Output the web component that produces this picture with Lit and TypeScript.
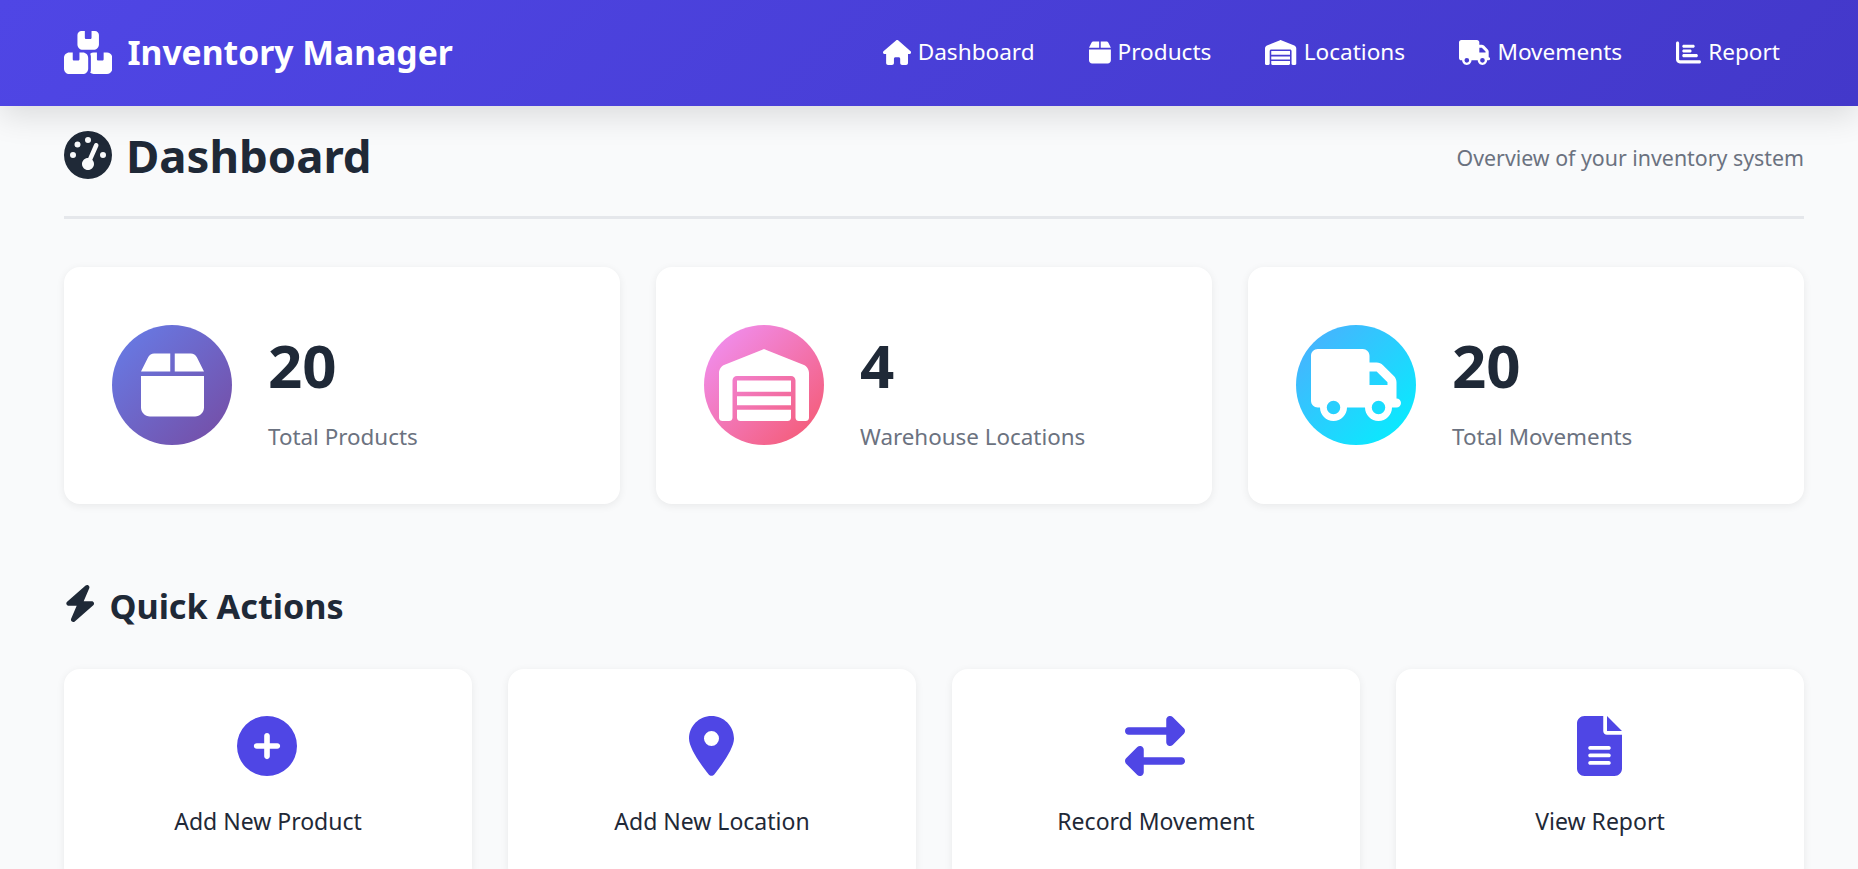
import { LitElement, css, html, svg } from "lit";
import { customElement } from "lit/decorators.js";

// font awesome solid shapes, [viewBox width, path]
const icons: Record<string, [number, string]> = {
  boxes: [576, "M248 0H208c-26.5 0-48 21.5-48 48V160c0 35.3 28.7 64 64 64H352c35.3 0 64-28.7 64-64V48c0-26.5-21.5-48-48-48H328V80c0 8.8-7.2 16-16 16H264c-8.8 0-16-7.2-16-16V0zM64 256c-35.3 0-64 28.7-64 64V448c0 35.3 28.7 64 64 64H224c35.3 0 64-28.7 64-64V320c0-35.3-28.7-64-64-64H184v80c0 8.8-7.2 16-16 16H120c-8.8 0-16-7.2-16-16V256H64zM352 512H512c35.3 0 64-28.7 64-64V320c0-35.3-28.7-64-64-64H472v80c0 8.8-7.2 16-16 16H408c-8.8 0-16-7.2-16-16V256H352c-15 0-28.8 5.1-39.7 13.8c4.9 10.4 7.7 22 7.7 34.2V464c0 12.2-2.8 23.8-7.7 34.2C323.2 506.9 337 512 352 512z"],
  gauge: [512, "M0 256a256 256 0 1 1 512 0A256 256 0 1 1 0 256zM288 96a32 32 0 1 0 -64 0 32 32 0 1 0 64 0zM256 416c35.3 0 64-28.7 64-64c0-17.4-6.9-33.1-18.1-44.6L366 161.7c5.3-12.1-.2-26.3-12.3-31.6s-26.3 .2-31.6 12.3L257.9 288c-.6 0-1.3 0-1.9 0c-35.3 0-64 28.7-64 64s28.7 64 64 64zM176 144a32 32 0 1 0 -64 0 32 32 0 1 0 64 0zM96 288a32 32 0 1 0 0-64 32 32 0 1 0 0 64zm352-32a32 32 0 1 0 -64 0 32 32 0 1 0 64 0z"],
  house: [576, "M575.8 255.5c0 18-15 32.1-32 32.1h-32l.7 160.2c0 2.7-.2 5.4-.5 8.1V472c0 22.1-17.9 40-40 40H456c-1.1 0-2.2 0-3.3-.1c-1.4 .1-2.8 .1-4.2 .1H416 392c-22.1 0-40-17.9-40-40V448 384c0-17.7-14.3-32-32-32H256c-17.7 0-32 14.3-32 32v64 24c0 22.1-17.9 40-40 40H160 128.1c-1.5 0-3-.1-4.5-.2c-1.2 .1-2.4 .2-3.6 .2H104c-22.1 0-40-17.9-40-40V360c0-.9 0-1.9 .1-2.8V287.6H32c-18 0-32-14-32-32.1c0-9 3-17 10-24L266.4 8c7-7 15-8 22-8s15 2 21 7L564.8 231.5c8 7 12 15 11 24z"],
  box: [448, "M50.7 58.5L0 160H208V32H93.7C75.5 32 58.9 42.3 50.7 58.5zM240 160H448L397.3 58.5C389.1 42.3 372.5 32 354.3 32H240V160zm208 32H0V416c0 35.3 28.7 64 64 64H384c35.3 0 64-28.7 64-64V192z"],
  warehouse: [640, "M0 488V171.3c0-26.2 15.9-49.7 40.2-59.4L308.1 4.8c7.6-3.1 16.1-3.1 23.8 0L599.8 111.9c24.3 9.7 40.2 33.3 40.2 59.4V488c0 13.3-10.7 24-24 24H568c-13.3 0-24-10.7-24-24V224c0-17.7-14.3-32-32-32H128c-17.7 0-32 14.3-32 32V488c0 13.3-10.7 24-24 24H24c-13.3 0-24-10.7-24-24zm488 24H152c-13.3 0-24-10.7-24-24V432H512v56c0 13.3-10.7 24-24 24zM128 400V336H512v64H128zm0-96V224H512v80H128z"],
  truck: [640, "M48 0C21.5 0 0 21.5 0 48V368c0 26.5 21.5 48 48 48H64c0 53 43 96 96 96s96-43 96-96H384c0 53 43 96 96 96s96-43 96-96h32c17.7 0 32-14.3 32-32s-14.3-32-32-32V288 256 237.3c0-17-6.7-33.3-18.7-45.3L512 114.7c-12-12-28.3-18.7-45.3-18.7H416V48c0-26.5-21.5-48-48-48H48zM416 160h50.7L544 237.3V256H416V160zM112 416a48 48 0 1 1 96 0 48 48 0 1 1 -96 0zm368-48a48 48 0 1 1 0 96 48 48 0 1 1 0-96z"],
  chart: [512, "M32 32c17.7 0 32 14.3 32 32V400c0 8.8 7.2 16 16 16H480c17.7 0 32 14.3 32 32s-14.3 32-32 32H80c-44.2 0-80-35.8-80-80V64C0 46.3 14.3 32 32 32zm96 96c0-17.7 14.3-32 32-32l192 0c17.7 0 32 14.3 32 32s-14.3 32-32 32l-192 0c-17.7 0-32-14.3-32-32zm32 64H288c17.7 0 32 14.3 32 32s-14.3 32-32 32H160c-17.7 0-32-14.3-32-32s14.3-32 32-32zm0 96H416c17.7 0 32 14.3 32 32s-14.3 32-32 32H160c-17.7 0-32-14.3-32-32s14.3-32 32-32z"],
  bolt: [448, "M349.4 44.6c5.9-13.7 1.5-29.7-10.6-38.5s-28.6-8-39.9 1.8l-256 224c-10 8.8-13.6 22.9-8.9 35.3S50.7 288 64 288H175.5L98.6 467.4c-5.9 13.7-1.5 29.7 10.6 38.5s28.6 8 39.9-1.8l256-224c10-8.8 13.6-22.9 8.9-35.3s-16.6-20.7-30-20.7H272.5L349.4 44.6z"],
  plus: [512, "M256 512A256 256 0 1 0 256 0a256 256 0 1 0 0 512zM232 344V280H168c-13.3 0-24-10.7-24-24s10.7-24 24-24h64V168c0-13.3 10.7-24 24-24s24 10.7 24 24v64h64c13.3 0 24 10.7 24 24s-10.7 24-24 24H280v64c0 13.3-10.7 24-24 24s-24-10.7-24-24z"],
  pin: [384, "M215.7 499.2C267 435 384 279.4 384 192C384 86 298 0 192 0S0 86 0 192c0 87.4 117 243 168.3 307.2c12.3 15.3 35.1 15.3 47.4 0zM192 128a64 64 0 1 1 0 128 64 64 0 1 1 0-128z"],
  exchange: [512, "M32 96l320 0V32c0-12.9 7.8-24.6 19.8-29.6s25.7-2.2 34.9 6.9l96 96c6 6 9.4 14.1 9.4 22.6s-3.4 16.6-9.4 22.6l-96 96c-9.2 9.2-22.9 11.9-34.9 6.9s-19.8-16.6-19.8-29.6V160L32 160c-17.7 0-32-14.3-32-32s14.3-32 32-32zM480 352c17.7 0 32 14.3 32 32s-14.3 32-32 32H160v64c0 12.9-7.8 24.6-19.8 29.6s-25.7 2.2-34.9-6.9l-96-96c-6-6-9.4-14.1-9.4-22.6s3.4-16.6 9.4-22.6l96-96c9.2-9.2 22.9-11.9 34.9-6.9s19.8 16.6 19.8 29.6l0 64H480z"],
  file: [384, "M64 0C28.7 0 0 28.7 0 64V448c0 35.3 28.7 64 64 64H320c35.3 0 64-28.7 64-64V160H256c-17.7 0-32-14.3-32-32V0H64zM256 0V128H384L256 0zM112 256H272c8.8 0 16 7.2 16 16s-7.2 16-16 16H112c-8.8 0-16-7.2-16-16s7.2-16 16-16zm0 64H272c8.8 0 16 7.2 16 16s-7.2 16-16 16H112c-8.8 0-16-7.2-16-16s7.2-16 16-16zm0 64H272c8.8 0 16 7.2 16 16s-7.2 16-16 16H112c-8.8 0-16-7.2-16-16s7.2-16 16-16z"],
};

const icon = (name: string) => {
  const [w, d] = icons[name];
  return html`<svg class="fa" viewBox="0 0 ${w} 512" style="width:${w / 512}em" aria-hidden="true">${svg`<path fill="currentColor" d=${d}></path>`}</svg>`;
};

const navItems = [
  ["house", "Dashboard"],
  ["box", "Products"],
  ["warehouse", "Locations"],
  ["truck", "Movements"],
  ["chart", "Report"],
];

const stats = [
  ["box", "20", "Total Products", "products"],
  ["warehouse", "4", "Warehouse Locations", "locations"],
  ["truck", "20", "Total Movements", "movements"],
];

const actions = [
  ["plus", "Add New Product"],
  ["pin", "Add New Location"],
  ["exchange", "Record Movement"],
  ["file", "View Report"],
];

@customElement("app-root")
export class AppRoot extends LitElement {
  public static styles = css`
    :host {
      display: block;
      min-height: 869px;
      background: #f9fafb;
      color: #1f2937;
      font-family: "Noto Sans", "Open Sans", sans-serif;
    }

    .fa {
      display: block;
      flex: none;
      height: 1em;
    }

    .topbar {
      position: relative;
      z-index: 2;
      display: flex;
      justify-content: space-between;
      align-items: center;
      box-sizing: border-box;
      height: 106px;
      padding: 0 54px 2px 64px;
      background: linear-gradient(135deg, #4f46e5, #4338ca);
      box-shadow: 0 10px 30px rgba(0, 0, 0, 0.12);
      color: #fff;
    }

    .brand {
      display: flex;
      align-items: center;
      gap: 15px;
      font-size: 33.7px;
      font-weight: 700;
    }

    .brand .fa {
      font-size: 43px;
    }

    .nav {
      display: flex;
      gap: 6px;
    }

    .nav-link {
      display: flex;
      align-items: center;
      gap: 7px;
      padding: 0 24px;
      font-size: 22.6px;
      line-height: 30px;
    }

    .nav-link .fa {
      font-size: 25px;
    }

    main {
      padding: 0 54px 0 64px;
    }

    .page-head {
      display: flex;
      justify-content: space-between;
      align-items: center;
      padding: 20px 0 32px;
      border-bottom: 3px solid #e5e7eb;
    }

    .page-title {
      display: flex;
      align-items: center;
      gap: 14px;
      margin: 0;
      font-size: 45.5px;
      line-height: 58px;
      font-weight: 700;
    }

    .page-title .fa {
      font-size: 48px;
    }

    .subtitle {
      margin: 4px 0 0;
      color: #6b7280;
      font-size: 21.35px;
    }

    .stat-grid {
      display: grid;
      grid-template-columns: repeat(3, 1fr);
      gap: 36px;
      margin-top: 48px;
    }

    .stat-card {
      display: flex;
      align-items: center;
      gap: 36px;
      padding: 50px 48px 51px;
      background: #fff;
      border-radius: 16px;
      box-shadow: 0 2px 8px rgba(0, 0, 0, 0.07);
    }

    .stat-icon {
      display: flex;
      align-items: center;
      justify-content: center;
      flex: none;
      width: 120px;
      height: 120px;
      border-radius: 50%;
      color: #fff;
      font-size: 72px;
    }

    .stat-icon.products {
      background: linear-gradient(135deg, #667eea, #764ba2);
    }

    .stat-icon.locations {
      background: linear-gradient(135deg, #f093fb, #f5576c);
    }

    .stat-icon.movements {
      background: linear-gradient(135deg, #4facfe, #00f2fe);
    }

    .stat-value {
      font-size: 60px;
      font-weight: 700;
      line-height: 96px;
    }

    .stat-label {
      margin-top: 8px;
      color: #6b7280;
      font-size: 22.4px;
      line-height: 32px;
    }

    .section-title {
      display: flex;
      align-items: center;
      gap: 13px;
      margin: 75px 0 41px;
      font-size: 34.2px;
      line-height: 44px;
      font-weight: 700;
    }

    .section-title .fa {
      font-size: 37px;
    }

    .section-title span {
      padding-top: 5px;
    }

    .action-grid {
      display: grid;
      grid-template-columns: repeat(4, 1fr);
      gap: 36px;
    }

    .action-card {
      display: flex;
      flex-direction: column;
      align-items: center;
      padding: 47px 24px;
      background: #fff;
      border-radius: 16px;
      box-shadow: 0 2px 8px rgba(0, 0, 0, 0.07);
    }

    .action-icon {
      display: flex;
      margin-right: 2px;
      color: #4f46e5;
      font-size: 60px;
    }

    .action-label {
      margin-top: 30px;
      font-size: 23px;
      line-height: 30px;
    }
  `;

  public render() {
    return html`
      <header class="topbar">
        <div class="brand">${icon("boxes")}<span>Inventory Manager</span></div>
        <nav class="nav">
          ${navItems.map(
            ([name, label]) => html`<div class="nav-link">${icon(name)}<span>${label}</span></div>`,
          )}
        </nav>
      </header>
      <main>
        <section class="page-head">
          <h1 class="page-title">${icon("gauge")}<span>Dashboard</span></h1>
          <p class="subtitle">Overview of your inventory system</p>
        </section>

        <section class="stat-grid">
          ${stats.map(
            ([name, value, label, tone]) => html`
              <article class="stat-card">
                <div class="stat-icon ${tone}">${icon(name)}</div>
                <div>
                  <div class="stat-value">${value}</div>
                  <div class="stat-label">${label}</div>
                </div>
              </article>
            `,
          )}
        </section>

        <h2 class="section-title">${icon("bolt")}<span>Quick Actions</span></h2>
        <section class="action-grid">
          ${actions.map(
            ([name, label]) => html`
              <article class="action-card">
                <div class="action-icon">${icon(name)}</div>
                <div class="action-label">${label}</div>
              </article>
            `,
          )}
        </section>
      </main>
    `;
  }
}
